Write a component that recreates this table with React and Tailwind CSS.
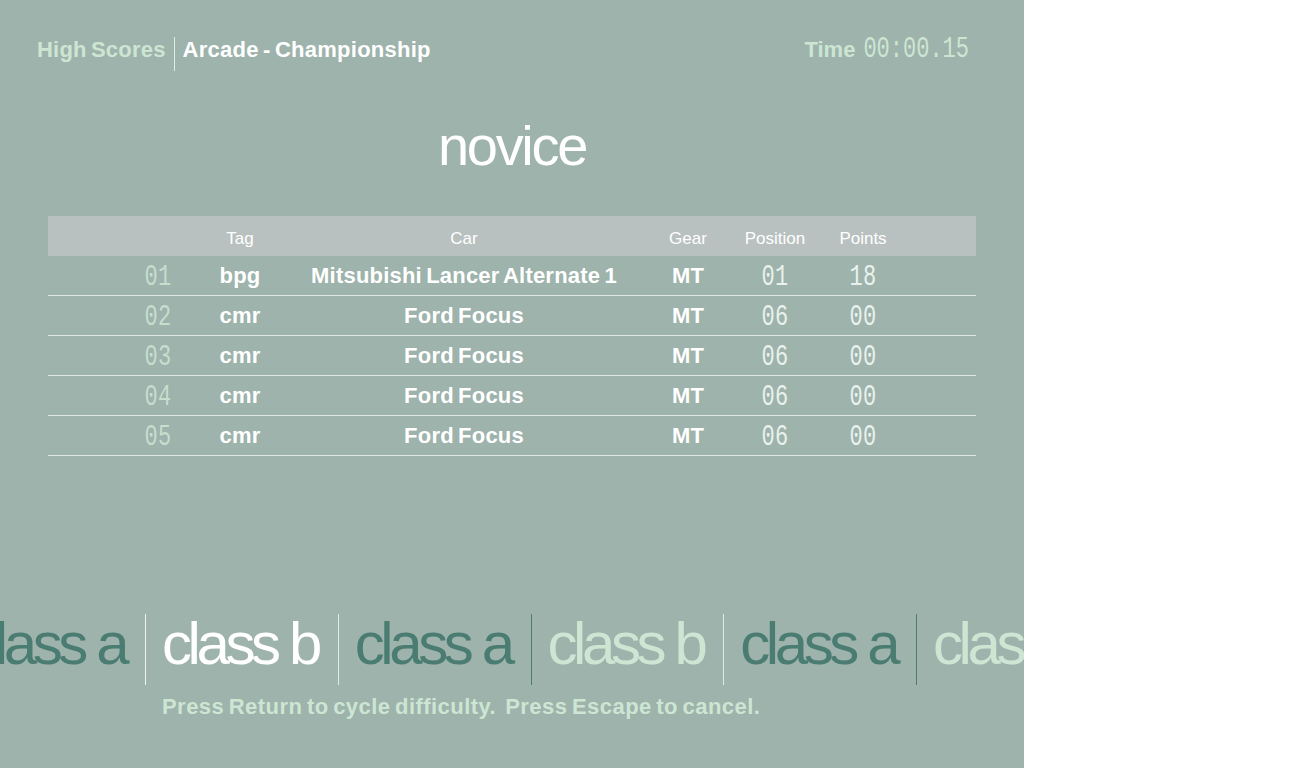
import React from 'react';

const rows = [
  { rank: '01', tag: 'bpg', car: 'Mitsubishi Lancer Alternate 1', gear: 'MT', pos: '01', pts: '18' },
  { rank: '02', tag: 'cmr', car: 'Ford Focus', gear: 'MT', pos: '06', pts: '00' },
  { rank: '03', tag: 'cmr', car: 'Ford Focus', gear: 'MT', pos: '06', pts: '00' },
  { rank: '04', tag: 'cmr', car: 'Ford Focus', gear: 'MT', pos: '06', pts: '00' },
  { rank: '05', tag: 'cmr', car: 'Ford Focus', gear: 'MT', pos: '06', pts: '00' },
];

// difficulty strip, the first entry is cut off at the left edge
const classes = [
  { label: 'class a', text: 'text-[#4a7c72]', line: 'border-transparent' },
  { label: 'class b', text: 'text-white', line: 'border-[#eef4f0]' },
  { label: 'class a', text: 'text-[#4a7c72]', line: 'border-[#dfece4]' },
  { label: 'class b', text: 'text-[#cde5d3]', line: 'border-[#4a7c72]' },
  { label: 'class a', text: 'text-[#4a7c72]', line: 'border-[#dfece4]' },
  { label: 'class b', text: 'text-[#cde5d3]', line: 'border-[#4a7c72]' },
];

const sans = "font-['Liberation_Sans',Arial,sans-serif]";
const mono = "font-['Liberation_Mono','DejaVu_Sans_Mono',monospace]";

function Digits({ children, className }) {
  return (
    <span className={`${mono} inline-block text-[22px] leading-none font-normal scale-y-[1.3] ${className}`}>
      {children}
    </span>
  );
}

function App() {
  return (
    <div className={`flex min-h-[768px] bg-white ${sans}`}>
      <div className="w-[1024px] h-[768px] bg-[#9db3ab] flex flex-col overflow-hidden">
        {/* top bar */}
        <div className="flex items-start justify-between pl-[37px] pr-[55px] pt-[37px]">
          <div className="flex items-start">
            <span className="pt-[2px] text-[22px] leading-none font-bold tracking-[0.2px] [word-spacing:-2px] text-[#cde5d3]">High Scores</span>
            <div className="w-px h-[34px] bg-[#dfece4] ml-[8px] mr-[8px]" />
            <span className="pt-[2px] text-[22px] leading-none font-bold tracking-[0.25px] [word-spacing:-2px] text-white">Arcade - Championship</span>
          </div>
          <div className="flex items-start gap-[8px] pt-[2px]">
            <span className="text-[22px] leading-none font-bold text-[#cde5d3]">Time</span>
            <Digits className="text-[#cde5d3]">00:00.15</Digits>
          </div>
        </div>

        <h1 className="mt-[47px] text-center text-[56px] leading-none font-normal tracking-[-2.3px] text-white">novice</h1>

        {/* scores table */}
        <div className="mt-[42px] mx-[48px]">
          <div className="grid grid-cols-[70px_80px_84px_364px_84px_90px_86px_70px] h-10 items-center bg-[#b8c1bf] text-[17px] text-white">
            <span />
            <span />
            <span className="text-center pt-[6px]">Tag</span>
            <span className="text-center pt-[6px]">Car</span>
            <span className="text-center pt-[6px]">Gear</span>
            <span className="text-center pt-[6px]">Position</span>
            <span className="text-center pt-[6px]">Points</span>
            <span />
          </div>
          {rows.map((r) => (
            <div
              key={r.rank}
              className="grid grid-cols-[70px_80px_84px_364px_84px_90px_86px_70px] h-10 items-center border-b border-[#dce8e1] text-[22px] font-bold text-white tracking-[0.2px] [word-spacing:-2px]"
            >
              <span />
              <span className="text-center"><Digits className="text-[#c7ddcf]">{r.rank}</Digits></span>
              <span className="text-center">{r.tag}</span>
              <span className="text-center">{r.car}</span>
              <span className="text-center">{r.gear}</span>
              <span className="text-center"><Digits className="text-[#e9f1ec]">{r.pos}</Digits></span>
              <span className="text-center"><Digits className="text-[#e9f1ec]">{r.pts}</Digits></span>
              <span />
            </div>
          ))}
        </div>

        {/* difficulty classes */}
        <div className="mt-[158px] flex ml-[-47.75px] whitespace-nowrap">
          {classes.map((c, i) => (
            <div key={i} className={`shrink-0 w-[192.75px] h-[71px] border-l ${c.line} pl-[16px]`}>
              <span className={`block text-[60px] leading-none tracking-[-4.4px] ${c.text}`}>{c.label}</span>
            </div>
          ))}
        </div>

        <p className="mt-[11px] pl-[162px] text-[22px] leading-none font-bold tracking-[0.45px] [word-spacing:-2px] text-[#cde5d3] whitespace-pre">
          Press Return to cycle difficulty.  Press Escape to cancel.
        </p>
      </div>
    </div>
  );
}

export default App;
